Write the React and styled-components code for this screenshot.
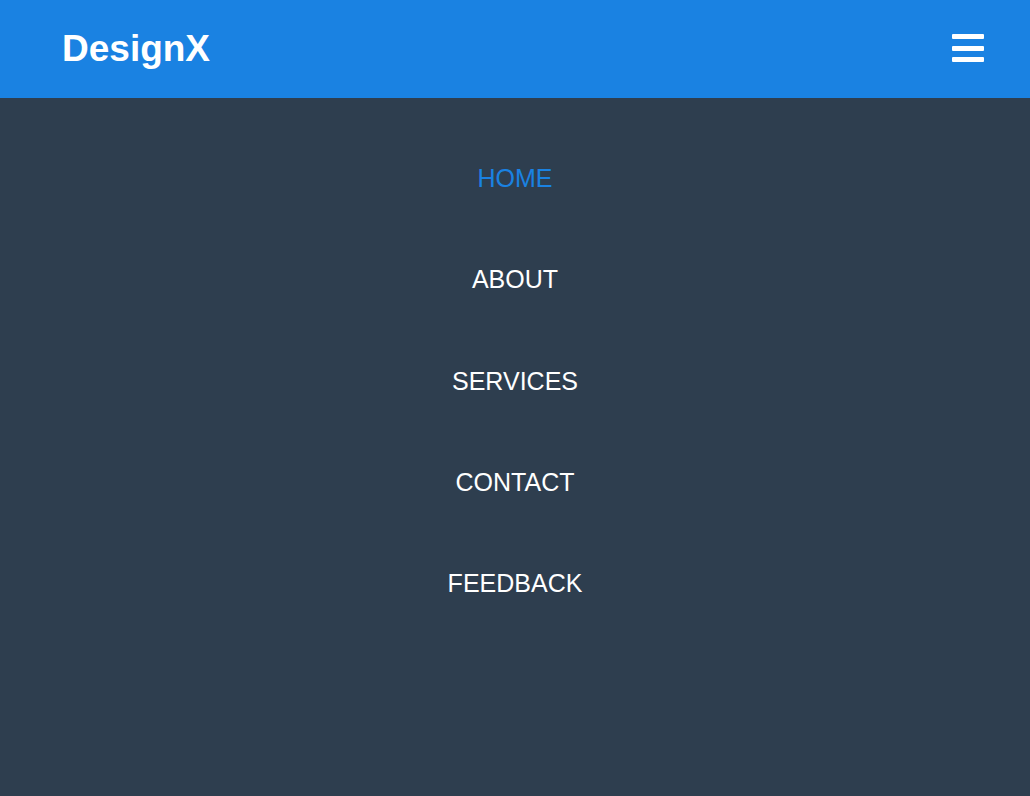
import React, { useState } from "react";
import styled, { createGlobalStyle } from "styled-components";

const GlobalStyle = createGlobalStyle`
  html, body {
    margin: 0;
    padding: 0;
    height: 100%;
    background: #2e3e4f;
  }
  body {
    font-family: "Liberation Sans", Arial, Helvetica, sans-serif;
  }
  #root {
    min-height: 100%;
  }
`;

const Page = styled.div`
  min-height: 796px;
  background: #2e3e4f;
  display: flex;
  flex-direction: column;
`;

const Header = styled.header`
  height: 98px;
  background: #1a82e2;
  display: flex;
  align-items: center;
  justify-content: space-between;
  padding: 0 46px 0 62px;
  box-sizing: border-box;
`;

const Logo = styled.div`
  color: #ffffff;
  font-size: 37px;
  font-weight: 700;
  line-height: 1;
  margin-top: -2px;
`;

const MenuButton = styled.button`
  width: 32px;
  height: 28px;
  padding: 0;
  border: 0;
  background: transparent;
  display: flex;
  flex-direction: column;
  justify-content: space-between;
  cursor: pointer;
  margin-top: -2px;
`;

const Bar = styled.span`
  display: block;
  width: 32px;
  height: 5px;
  border-radius: 1px;
  background: #ffffff;
`;

const NavList = styled.ul`
  list-style: none;
  margin: 0;
  padding: 30px 0 0;
  display: flex;
  flex-direction: column;
`;

const NavItem = styled.li`
  height: 101.25px;
  display: flex;
  align-items: center;
  justify-content: center;
`;

const NavLink = styled.a`
  font-size: 25px;
  line-height: 1;
  text-decoration: none;
  cursor: pointer;
  color: ${({ $active }) => ($active ? "#1a82e2" : "#ffffff")};
`;

const items = ["HOME", "ABOUT", "SERVICES", "CONTACT", "FEEDBACK"];

export default function App() {
  const [active, setActive] = useState("HOME");

  return (
    <Page>
      <GlobalStyle />
      <Header>
        <Logo>DesignX</Logo>
        <MenuButton aria-label="Menu">
          <Bar />
          <Bar />
          <Bar />
        </MenuButton>
      </Header>
      <NavList>
        {items.map((item) => (
          <NavItem key={item}>
            <NavLink $active={active === item} onClick={() => setActive(item)}>
              {item}
            </NavLink>
          </NavItem>
        ))}
      </NavList>
    </Page>
  );
}
